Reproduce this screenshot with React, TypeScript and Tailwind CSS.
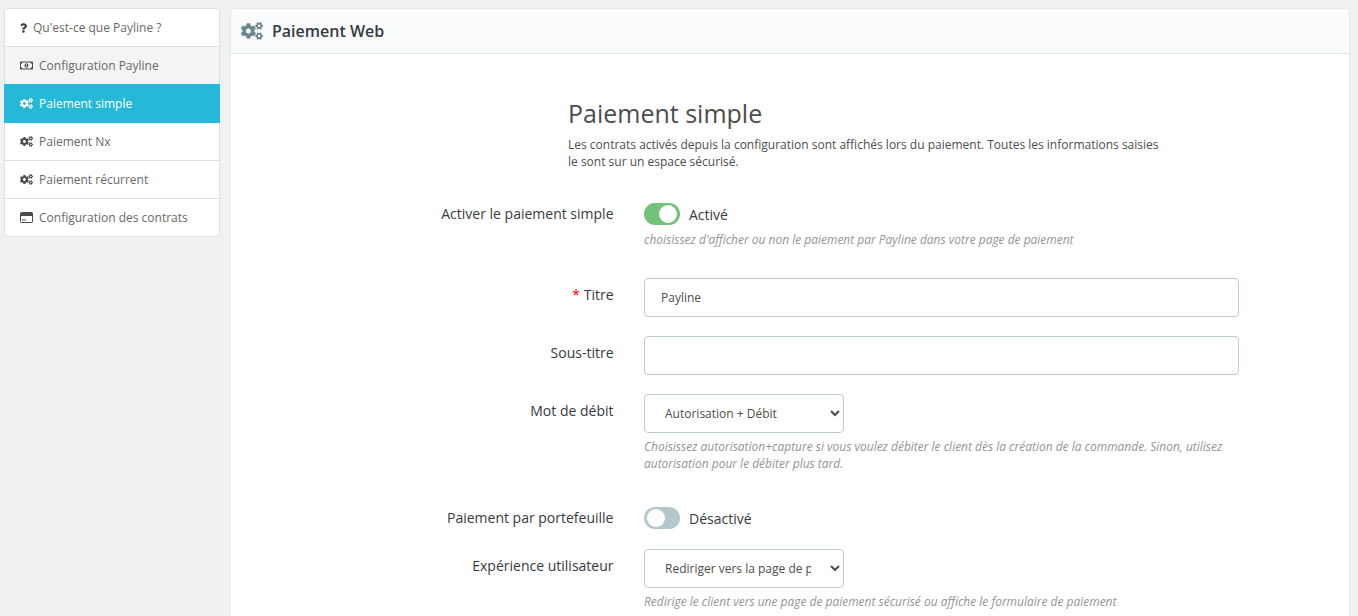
import React from 'react';
import { FaCogs, FaQuestion, FaRegMoneyBillAlt } from 'react-icons/fa';

const CardIcon: React.FC = () => (
  <svg viewBox="0 0 13 11" className="h-[11px] w-[13px] text-[#4a4a4a]" fill="none">
    <rect x="0.5" y="0.5" width="12" height="10" rx="0.8" stroke="currentColor" />
    <rect x="0.5" y="1" width="12" height="3" fill="currentColor" />
    <rect x="2" y="7.5" width="4" height="1" fill="currentColor" />
  </svg>
);

const menu = [
  { label: "Qu'est-ce que Payline ?", kind: 'question', row: 'h-[38px] border-b border-[#dfdfdf] pl-[15px] text-[#6c6868]' },
  { label: 'Configuration Payline', kind: 'money', row: 'h-[37px] bg-[#f4f4f4] pl-[15px] text-[#6c6868]' },
  { label: 'Paiement simple', kind: 'active', row: '-mx-px h-[39px] bg-[#25b9d7] pl-[16px] text-white' },
  { label: 'Paiement Nx', kind: 'cogs', row: 'h-[38px] border-b border-[#dfdfdf] pl-[15px] text-[#6c6868]' },
  { label: 'Paiement récurrent', kind: 'cogs', row: 'h-[38px] border-b border-[#dfdfdf] pl-[15px] text-[#6c6868]' },
  { label: 'Configuration des contrats', kind: 'card', row: 'h-[37px] pl-[15px] text-[#6c6868]' },
];

const Row: React.FC<{ label: React.ReactNode; children: React.ReactNode; className?: string; labelClass?: string }> = ({ label, children, className, labelClass }) => (
  <div className={`flex ${className ?? ''}`}>
    <label className={`w-[413px] pr-[30.5px] text-right text-[14px] leading-[21px] text-[#363a41] ${labelClass ?? ''}`}>{label}</label>
    <div className="w-[595px]">{children}</div>
  </div>
);

const Toggle: React.FC<{ on: boolean; text: string }> = ({ on, text }) => (
  <div className="flex h-[22px] items-center gap-[9px]">
    <span className={`flex h-[22px] w-[36px] items-center rounded-full px-[3px] ${on ? 'justify-end bg-[#72c279]' : 'justify-start bg-[#b3c7cd]'}`}>
      <span className="h-[18px] w-[18px] rounded-full bg-white" />
    </span>
    <span className="text-[14px] text-[#363a41]">{text}</span>
  </div>
);

const Help: React.FC<{ children: React.ReactNode; className?: string }> = ({ children, className }) => (
  <p className={`text-[11.97px] leading-[17px] italic text-[#949494] ${className ?? 'mt-[5px]'}`}>{children}</p>
);

export default function App() {
  return (
    <div className="flex h-[616px] items-start gap-[10px] overflow-hidden bg-[#eff1f2] pt-2 pl-1 font-['Open_Sans',sans-serif]">
      {/* Sidebar */}
      <div className="w-[216px] shrink-0 rounded-[4px] border border-[#dfdfdf] bg-white">
        {menu.map((item) => (
          <div key={item.label} className={`flex items-center gap-[6px] text-[12px] ${item.row}`}>
            {item.kind === 'question' && <FaQuestion className="h-[10px] w-[7px] text-[#363a41]" />}
            {item.kind === 'money' && <FaRegMoneyBillAlt className="h-[13px] w-[13px] text-[#4a4a4a]" />}
            {item.kind === 'active' && <FaCogs className="h-[13px] w-[13px] text-white" />}
            {item.kind === 'cogs' && <FaCogs className="h-[13px] w-[13px] text-[#4a4a4a]" />}
            {item.kind === 'card' && <CardIcon />}
            <span>{item.label}</span>
          </div>
        ))}
      </div>

      {/* Main card */}
      <div className="h-[640px] w-[1120px] shrink-0 rounded-[4px] border border-[#e5ebec] bg-white">
        <div className="flex h-[45px] items-center gap-[9px] rounded-t-[4px] border-b border-[#dbe6e9] bg-[#fafbfc] pl-[10px]">
          <FaCogs className="h-[22px] w-[22px] text-[#6c868e]" />
          <span className="text-[16px] font-semibold text-[#363a41]">Paiement Web</span>
        </div>

        <div className="pt-[43px]">
          <div className="pl-[337px]">
            <h2 className="text-[25px] leading-[32px] text-[#4d4d4d]">Paiement simple</h2>
            <p className="mt-[7px] w-[600px] text-[12px] leading-[17px] text-[#4d4d4d]">
              Les contrats activés depuis la configuration sont affichés lors du paiement. Toutes les informations saisies le sont sur un espace sécurisé.
            </p>
          </div>

          <Row className="mt-[33px]" label="Activer le paiement simple">
            <Toggle on text="Activé" />
            <Help className="mt-[6px]">choisissez d'afficher ou non le paiement par Payline dans votre page de paiement</Help>
          </Row>

          <Row className="mt-[30px]" labelClass="pt-[6px]" label={<><span className="text-[#ff0000]">*</span> Titre</>}>
            <input readOnly value="Payline" className="h-[39px] w-full rounded-[4px] border border-[#bbcdd2] px-4 text-[12px] text-[#4d4d4d] outline-none" />
          </Row>

          <Row className="mt-[19px]" labelClass="pt-[6px]" label="Sous-titre">
            <input readOnly value="" className="h-[39px] w-full rounded-[4px] border border-[#bbcdd2] px-4 text-[12px] text-[#4d4d4d] outline-none" />
          </Row>

          <Row className="mt-[19px]" labelClass="pt-[6px]" label="Mot de débit">
            <select defaultValue="a" className="h-[39px] w-[200px] rounded-[4px] border border-[#bbcdd2] bg-white px-4 text-[12px] text-[#4d4d4d] outline-none">
              <option value="a">Autorisation + Débit</option>
            </select>
            <Help>Choisissez autorisation+capture si vous voulez débiter le client dès la création de la commande. Sinon, utilisez autorisation pour le débiter plus tard.</Help>
          </Row>

          <Row className="mt-[35px]" label="Paiement par portefeuille">
            <Toggle on={false} text="Désactivé" />
          </Row>

          <Row className="mt-[20px]" labelClass="pt-[6px]" label="Expérience utilisateur">
            <select defaultValue="r" className="h-[39px] w-[200px] rounded-[4px] border border-[#bbcdd2] bg-white px-4 text-[12px] text-[#4d4d4d] outline-none">
              <option value="r">Rediriger vers la page de paiement</option>
            </select>
            <Help>Redirige le client vers une page de paiement sécurisé ou affiche le formulaire de paiement</Help>
          </Row>
        </div>
      </div>
    </div>
  );
}
